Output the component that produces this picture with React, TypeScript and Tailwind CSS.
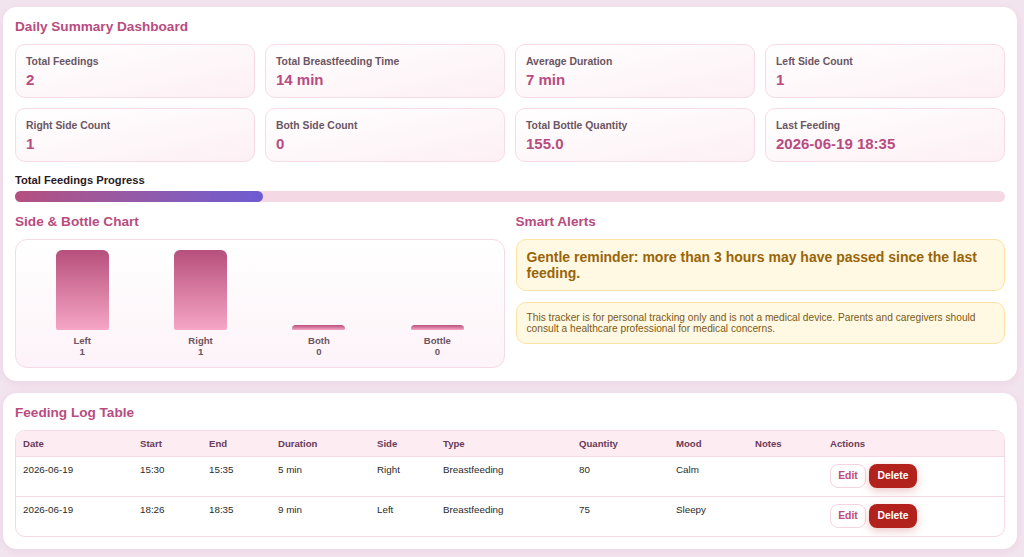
const stats = [
  { label: "Total Feedings", value: "2" },
  { label: "Total Breastfeeding Time", value: "14 min" },
  { label: "Average Duration", value: "7 min" },
  { label: "Left Side Count", value: "1" },
  { label: "Right Side Count", value: "1" },
  { label: "Both Side Count", value: "0" },
  { label: "Total Bottle Quantity", value: "155.0" },
  { label: "Last Feeding", value: "2026-06-19 18:35" },
];

const bars = [
  { label: "Left", count: 1 },
  { label: "Right", count: 1 },
  { label: "Both", count: 0 },
  { label: "Bottle", count: 0 },
];

const logs = [
  { date: "2026-06-19", start: "15:30", end: "15:35", duration: "5 min", side: "Right", type: "Breastfeeding", qty: "80", mood: "Calm", notes: "" },
  { date: "2026-06-19", start: "18:26", end: "18:35", duration: "9 min", side: "Left", type: "Breastfeeding", qty: "75", mood: "Sleepy", notes: "" },
];

const columns = [
  { name: "Date", w: "w-[117px]" },
  { name: "Start", w: "w-[69px]" },
  { name: "End", w: "w-[69px]" },
  { name: "Duration", w: "w-[99px]" },
  { name: "Side", w: "w-[66px]" },
  { name: "Type", w: "w-[136px]" },
  { name: "Quantity", w: "w-[97px]" },
  { name: "Mood", w: "w-[79px]" },
  { name: "Notes", w: "w-[75px]" },
  { name: "Actions", w: "" },
];

const SectionTitle = ({ children }: { children: React.ReactNode }) => (
  <h2 className="text-[13.6px] leading-[17px] font-bold text-[#b84c7f]">{children}</h2>
);

const StatCard = ({ label, value }: { label: string; value: string }) => (
  <div className="h-[54px] rounded-[10px] border border-[#f7dbe5] bg-gradient-to-br from-white to-[#fdf0f4] px-[10px] pt-[10px]">
    <p className="text-[10.4px] leading-[13px] font-bold text-[#6b5563]">{label}</p>
    <p className="mt-[3px] text-[15px] leading-[18px] font-bold text-[#b84c7f]">{value}</p>
  </div>
);

export default function App() {
  const max = Math.max(...bars.map((b) => b.count), 1);
  return (
    <div className="min-h-[557px] bg-[#f2e4ef] pl-[3px] pr-[7px] pt-[7px] pb-[8px] font-['Liberation_Sans',Arial,sans-serif]">
      <section className="rounded-[14px] bg-white px-[12px] pt-[11px] pb-[13px] shadow-[0_2px_8px_rgba(190,90,140,0.12)]">
        <SectionTitle>Daily Summary Dashboard</SectionTitle>
        <div className="mt-[9px] grid grid-cols-4 gap-[10px]">
          {stats.map((s) => (
            <StatCard key={s.label} label={s.label} value={s.value} />
          ))}
        </div>

        <p className="mt-[12px] text-[11.2px] leading-[13px] font-bold text-[#2a1a24]">Total Feedings Progress</p>
        <div className="mt-[4px] h-[11px] w-full rounded-full bg-[#f4d9e5]">
          <div className="h-full w-1/4 rounded-full bg-gradient-to-r from-[#b54f7f] to-[#6d5bd2]" />
        </div>

        <div className="mt-[11px] grid grid-cols-2 gap-[11px]">
          <div>
            <SectionTitle>Side &amp; Bottle Chart</SectionTitle>
            <div className="mt-[9px] grid grid-cols-4 rounded-[12px] border border-[#f6dbe6] bg-gradient-to-b from-white to-[#fdf3f8] px-[7px] pt-[10px] pb-[10px]">
              {bars.map((b) => (
                <div key={b.label} className="flex flex-col items-center">
                  <div className="flex h-[80px] items-end">
                    <div
                      className="w-[53px] rounded-t-[6px] rounded-b-[2px] bg-gradient-to-b from-[#b64f7c] to-[#f6a6c6]"
                      style={{ height: b.count === 0 ? 5 : (b.count / max) * 80 }}
                    />
                  </div>
                  <p className="mt-[5px] text-[9.6px] leading-[11px] font-bold text-[#6b5563]">{b.label}</p>
                  <p className="text-[9.6px] leading-[11px] font-bold text-[#6b5563]">{b.count}</p>
                </div>
              ))}
            </div>
          </div>

          <div>
            <SectionTitle>Smart Alerts</SectionTitle>
            <div className="mt-[9px] rounded-[10px] border border-[#fde3a4] bg-[#fff8e3] px-[10px] py-[9px]">
              <p className="text-[14px] leading-[16px] font-bold text-[#9a6508]">
                Gentle reminder: more than 3 hours may have passed since the last feeding.
              </p>
            </div>
            <div className="mt-[11px] rounded-[10px] border border-[#fde3a4] bg-[#fff8e3] px-[10px] py-[9px]">
              <p className="text-[10.2px] leading-[11px] text-[#7d5a16]">
                This tracker is for personal tracking only and is not a medical device. Parents and caregivers should consult a healthcare professional for medical concerns.
              </p>
            </div>
          </div>
        </div>
      </section>

      <section className="mt-[12px] rounded-[14px] bg-white px-[12px] pt-[11px] pb-[12px] shadow-[0_2px_8px_rgba(190,90,140,0.12)]">
        <SectionTitle>Feeding Log Table</SectionTitle>
        <div className="mt-[9px] overflow-hidden rounded-[10px] border border-[#f6d9e4]">
          <table className="w-full table-fixed border-collapse text-left">
            <thead>
              <tr className="h-[25px] bg-[#fdedf2]">
                {columns.map((c) => (
                  <th key={c.name} className={`${c.w} px-[7px] text-[9.6px] leading-[11px] font-bold text-[#6b3a58]`}>
                    {c.name}
                  </th>
                ))}
              </tr>
            </thead>
            <tbody>
              {logs.map((r, i) => (
                <tr key={i} className="h-[40px] border-t border-[#f6d9e4] align-top text-[9.8px] leading-[12px] text-[#2a2a2a]">
                  <td className="px-[7px] pt-[7px]">{r.date}</td>
                  <td className="px-[7px] pt-[7px]">{r.start}</td>
                  <td className="px-[7px] pt-[7px]">{r.end}</td>
                  <td className="px-[7px] pt-[7px]">{r.duration}</td>
                  <td className="px-[7px] pt-[7px]">{r.side}</td>
                  <td className="px-[7px] pt-[7px]">{r.type}</td>
                  <td className="px-[7px] pt-[7px]">{r.qty}</td>
                  <td className="px-[7px] pt-[7px]">{r.mood}</td>
                  <td className="px-[7px] pt-[7px]">{r.notes}</td>
                  <td className="px-[7px] pt-[7px]">
                    <div className="flex gap-[3px]">
                      <button className="h-[24px] w-[36px] rounded-[8px] border border-[#f6d3e0] bg-white text-[10.4px] font-bold text-[#b84c7f]">
                        Edit
                      </button>
                      <button className="h-[24px] w-[48px] rounded-[8px] bg-[#b3211c] text-[10.4px] font-bold text-white shadow-[0_3px_8px_rgba(179,33,28,0.25)]">
                        Delete
                      </button>
                    </div>
                  </td>
                </tr>
              ))}
            </tbody>
          </table>
        </div>
      </section>
    </div>
  );
}
